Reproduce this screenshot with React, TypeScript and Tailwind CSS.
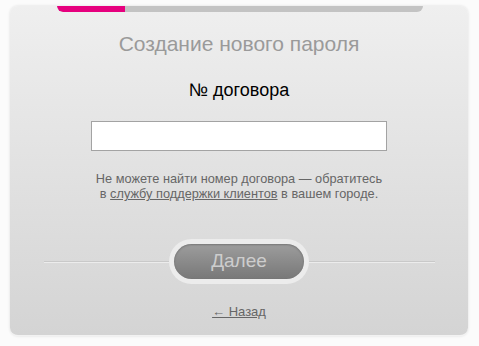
export default function App() {
  return (
    <div
      className="w-[479px] h-[346px] bg-[#fbfbfb] pt-[6px] pl-[10px]"
      style={{ fontFamily: '"Liberation Sans", Arial, sans-serif' }}
    >
      <div className="relative w-[458px] h-[330px] rounded-[8px] bg-gradient-to-b from-[#efefef] to-[#d4d4d4] border-b border-[#f2f2f2] shadow-[0_0_3px_rgba(0,0,0,0.12)] flex flex-col items-center">
        {/* step progress */}
        <div className="absolute top-0 left-[47px] w-[366px] h-[6px] rounded-b-[6px] bg-[#c3c3c3] overflow-hidden">
          <div className="w-[68px] h-full bg-[#e6007e] rounded-bl-[6px]" />
        </div>

        <h1 className="mt-[26px] text-[21px] leading-[24px] text-[#9a9a9a]">Создание нового пароля</h1>
        <div className="mt-[24px] text-[18px] leading-[20px] text-black">№ договора</div>

        <input
          type="text"
          className="mt-[21px] w-[296px] h-[30px] bg-white border border-[#a3a3a3] outline-none px-2 text-[14px]"
        />

        <p className="mt-[20px] text-[12.75px] leading-[15px] text-[#666] text-center">
          Не можете найти номер договора — обратитесь
          <br />в{" "}
          <a href="#" className="underline text-[#666]">
            службу поддержки клиентов
          </a>{" "}
          в вашем городе.
        </p>

        <div className="mt-[38px] w-[391px] flex items-center">
          <div className="flex-1 h-[2px] border-t border-[#c9c9c9] border-b border-b-[#ececec]" />
          <div className="p-[5px] rounded-full bg-[#ececec]">
            <button className="w-[130px] h-[35px] rounded-full bg-gradient-to-b from-[#9d9d9d] to-[#787878] text-[19px] text-[#cdcdcd] shadow-[inset_0_1px_2px_rgba(0,0,0,0.25)]">
              Далее
            </button>
          </div>
          <div className="flex-1 h-[2px] border-t border-[#c9c9c9] border-b border-b-[#ececec]" />
        </div>

        <a href="#" className="mt-[20px] text-[13px] leading-[15px] text-[#666] underline">
          ← Назад
        </a>
      </div>
    </div>
  );
}
